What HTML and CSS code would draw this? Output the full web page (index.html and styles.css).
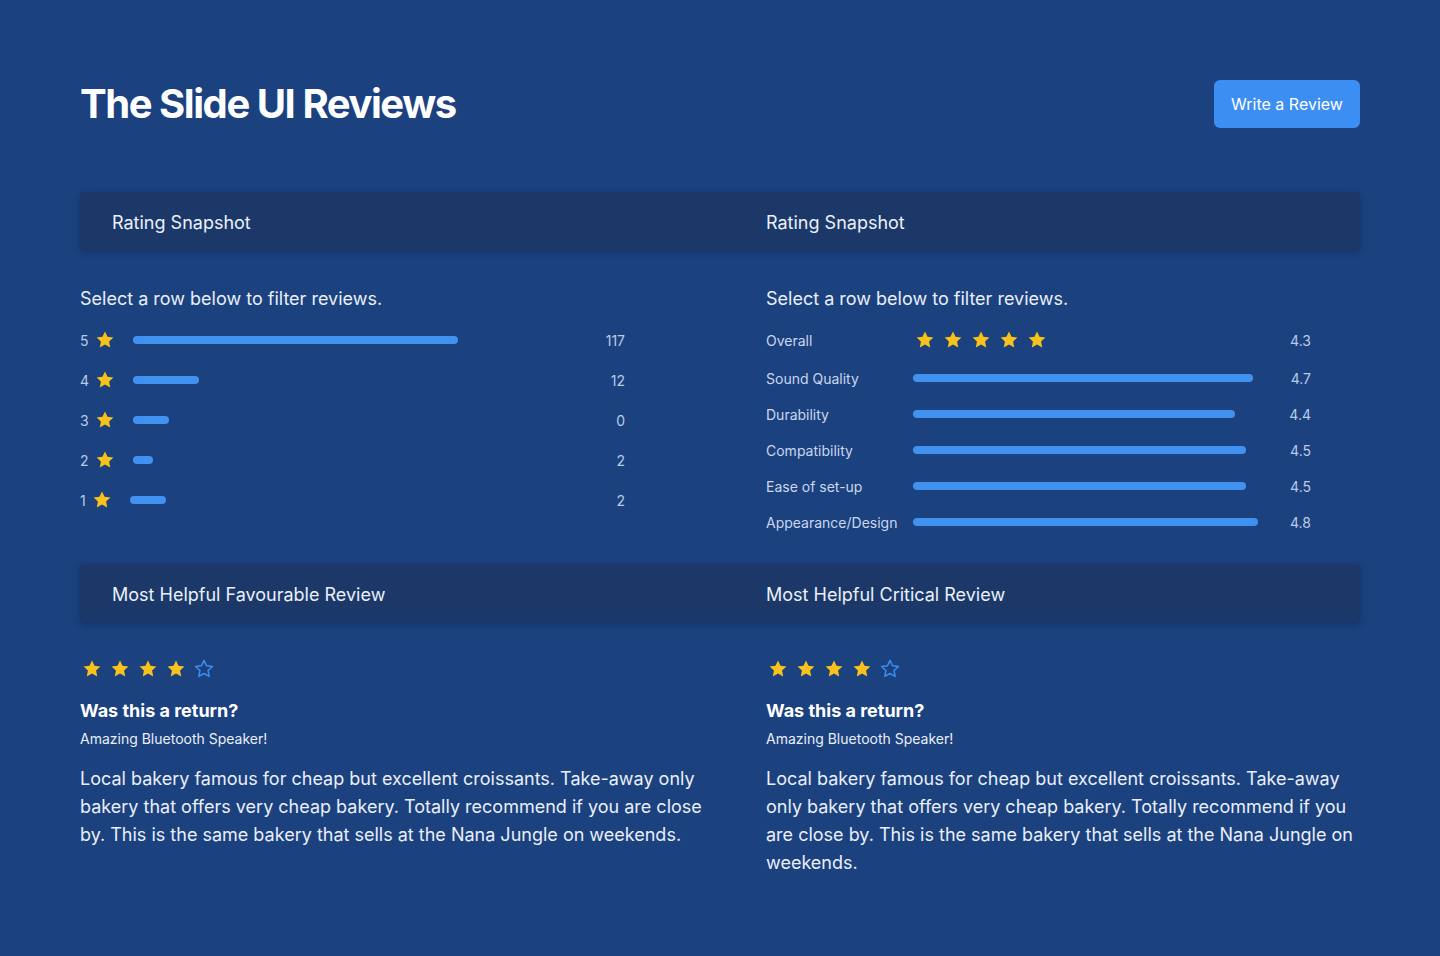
FILE: index.html
```html
<!DOCTYPE html>
<html lang="en">
<head>
<meta charset="utf-8">
<title>The Slide UI Reviews</title>
<link rel="stylesheet" href="styles.css">
</head>
<body>
<svg width="0" height="0" class="defs" aria-hidden="true">
  <defs>
    <path id="star" d="M12 2.6l2.75 5.87 6.45.78-4.75 4.43 1.22 6.37L12 16.9l-5.67 3.15 1.22-6.37L2.8 9.25l6.45-.78z"/>
  </defs>
</svg>
<main class="page">
  <header class="top">
    <h1 class="title">The Slide UI Reviews</h1>
    <button class="btn">Write a Review</button>
  </header>

  <section class="section">
    <div class="bar-head">
      <div class="bar-title first">Rating Snapshot</div>
      <div class="bar-title">Rating Snapshot</div>
    </div>
    <div class="cols snapshot">
      <div class="col">
        <p class="hint">Select a row below to filter reviews.</p>
        <ul class="dist">
          <li class="drow"><span class="dnum">5</span><svg class="star sm" viewBox="0 0 24 24"><use href="#star"/></svg><span class="dbar" style="width:325px"></span><span class="dcount">117</span></li>
          <li class="drow"><span class="dnum">4</span><svg class="star sm" viewBox="0 0 24 24"><use href="#star"/></svg><span class="dbar" style="width:66px"></span><span class="dcount">12</span></li>
          <li class="drow"><span class="dnum">3</span><svg class="star sm" viewBox="0 0 24 24"><use href="#star"/></svg><span class="dbar" style="width:36px"></span><span class="dcount">0</span></li>
          <li class="drow"><span class="dnum">2</span><svg class="star sm" viewBox="0 0 24 24"><use href="#star"/></svg><span class="dbar" style="width:20px"></span><span class="dcount">2</span></li>
          <li class="drow"><span class="dnum">1</span><svg class="star sm" viewBox="0 0 24 24"><use href="#star"/></svg><span class="dbar" style="width:36px"></span><span class="dcount">2</span></li>
        </ul>
      </div>
      <div class="col">
        <p class="hint">Select a row below to filter reviews.</p>
        <ul class="attrs">
          <li class="arow first-row"><span class="alabel">Overall</span>
            <span class="astars">
              <svg class="star" viewBox="0 0 24 24"><use href="#star"/></svg>
              <svg class="star" viewBox="0 0 24 24"><use href="#star"/></svg>
              <svg class="star" viewBox="0 0 24 24"><use href="#star"/></svg>
              <svg class="star" viewBox="0 0 24 24"><use href="#star"/></svg>
              <svg class="star" viewBox="0 0 24 24"><use href="#star"/></svg>
            </span>
            <span class="aval">4.3</span></li>
          <li class="arow"><span class="alabel">Sound Quality</span><span class="atrack"><span class="abar" style="width:340px"></span></span><span class="aval">4.7</span></li>
          <li class="arow"><span class="alabel">Durability</span><span class="atrack"><span class="abar" style="width:322px"></span></span><span class="aval">4.4</span></li>
          <li class="arow"><span class="alabel">Compatibility</span><span class="atrack"><span class="abar" style="width:333px"></span></span><span class="aval">4.5</span></li>
          <li class="arow"><span class="alabel">Ease of set-up</span><span class="atrack"><span class="abar" style="width:333px"></span></span><span class="aval">4.5</span></li>
          <li class="arow"><span class="alabel">Appearance/Design</span><span class="atrack"><span class="abar" style="width:345px"></span></span><span class="aval">4.8</span></li>
        </ul>
      </div>
    </div>
  </section>

  <section class="section second">
    <div class="bar-head">
      <div class="bar-title first">Most Helpful Favourable Review</div>
      <div class="bar-title">Most Helpful Critical Review</div>
    </div>
    <div class="cols reviews">
      <article class="review">
        <div class="rstars">
          <svg class="star" viewBox="0 0 24 24"><use href="#star"/></svg>
          <svg class="star" viewBox="0 0 24 24"><use href="#star"/></svg>
          <svg class="star" viewBox="0 0 24 24"><use href="#star"/></svg>
          <svg class="star" viewBox="0 0 24 24"><use href="#star"/></svg>
          <svg class="star empty" viewBox="0 0 24 24"><use href="#star"/></svg>
        </div>
        <h3 class="rtitle">Was this a return?</h3>
        <p class="rsub">Amazing Bluetooth Speaker!</p>
        <p class="rtext">Local bakery famous for cheap but excellent croissants. Take-away only bakery that offers very cheap bakery. Totally recommend if you are close by. This is the same bakery that sells at the Nana Jungle on weekends.</p>
      </article>
      <article class="review">
        <div class="rstars">
          <svg class="star" viewBox="0 0 24 24"><use href="#star"/></svg>
          <svg class="star" viewBox="0 0 24 24"><use href="#star"/></svg>
          <svg class="star" viewBox="0 0 24 24"><use href="#star"/></svg>
          <svg class="star" viewBox="0 0 24 24"><use href="#star"/></svg>
          <svg class="star empty" viewBox="0 0 24 24"><use href="#star"/></svg>
        </div>
        <h3 class="rtitle">Was this a return?</h3>
        <p class="rsub">Amazing Bluetooth Speaker!</p>
        <p class="rtext">Local bakery famous for cheap but excellent croissants. Take-away only bakery that offers very cheap bakery. Totally recommend if you are close by. This is the same bakery that sells at the Nana Jungle on weekends.</p>
      </article>
    </div>
  </section>
</main>
</body>
</html>
```

FILE: styles.css
```css
* { box-sizing: border-box; }
html, body { margin: 0; padding: 0; }
body {
  background: #1c417f;
  color: #e9eff9;
  font-family: Inter, "Noto Sans", "Liberation Sans", sans-serif;
  min-height: 956px;
}
.defs { position: absolute; }
.page {
  width: 1280px;
  margin: 0 auto;
  padding-top: 80px;
}
.top {
  display: flex;
  justify-content: space-between;
  align-items: center;
  height: 48px;
}
.title {
  margin: 0;
  font-size: 40px;
  line-height: 48px;
  font-weight: 700;
  letter-spacing: -1.45px;
  color: #ffffff;
}
.btn {
  width: 146px;
  height: 48px;
  border: none;
  border-radius: 6px;
  background: #3d8ef2;
  color: #ffffff;
  font-family: inherit;
  font-size: 16px;
  padding: 0;
}
.section { margin-top: 64px; }
.section.second { margin-top: 24px; }
.bar-head {
  display: grid;
  grid-template-columns: 640px 1fr;
  column-gap: 46px;
  align-items: center;
  height: 58px;
  padding-top: 2px;
  background: #1c3869;
  border-radius: 4px;
  box-shadow: 0 2px 6px rgba(10, 25, 55, 0.35);
}
.bar-title {
  font-size: 18px;
  color: #eaf0fa;
}
.bar-title.first { padding-left: 32px; }
.cols {
  display: grid;
  grid-template-columns: 640px 1fr;
  column-gap: 46px;
}
.snapshot { padding-top: 35px; }
.hint {
  margin: 0;
  font-size: 18px;
  line-height: 28px;
}
ul { list-style: none; margin: 7px 0 0; padding: 0; }
.dist { width: 545px; }
.drow {
  display: flex;
  align-items: center;
  height: 40px;
  font-size: 14px;
  color: #b9cbe9;
}
.star {
  width: 22px;
  height: 22px;
  fill: #f7c21b;
  display: block;
}
.star.sm { margin-left: 5px; margin-right: 17px; }
.dbar {
  height: 8px;
  border-radius: 4px;
  background: #4191f0;
}
.dcount { margin-left: auto; }
.attrs { width: 544px; }
.arow {
  display: flex;
  align-items: center;
  height: 36px;
  font-size: 14px;
  color: #c9d7ef;
}
.arow.first-row { height: 40px; }
.alabel { width: 147px; flex: none; }
.astars { display: flex; gap: 6px; margin-left: 1px; }
.atrack { display: flex; }
.abar {
  height: 8px;
  border-radius: 4px;
  background: #4191f0;
}
.aval { margin-left: auto; margin-right: -1px; color: #b9cbe9; }
.reviews { padding-top: 36px; }
.rstars { display: flex; gap: 6px; margin-left: 1px; }
.star.empty {
  fill: none;
  stroke: #3d8ef2;
  stroke-width: 1.6;
  stroke-linejoin: round;
}
.rtitle {
  margin: 17px 0 0;
  font-size: 18px;
  line-height: 28px;
  font-weight: 700;
  color: #ffffff;
}
.rsub {
  margin: 0;
  font-size: 14px;
  line-height: 28px;
}
.rtext {
  margin: 12px 0 0;
  font-size: 18px;
  line-height: 28px;
}
```
